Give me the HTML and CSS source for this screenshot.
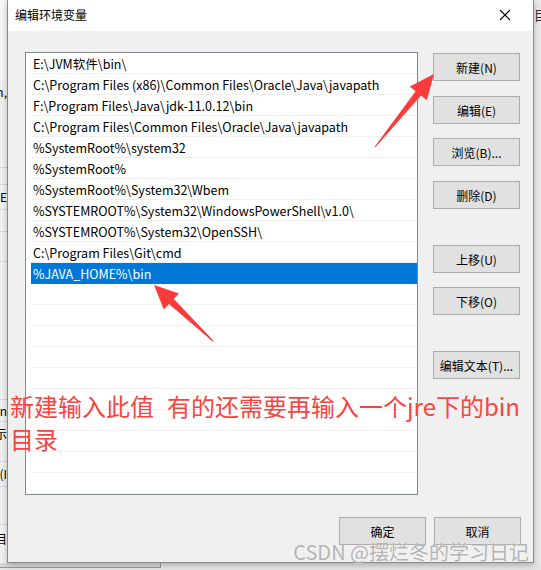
FILE: index.html
```html
<!DOCTYPE html>
<html lang="zh">
<head>
<meta charset="utf-8">
<title>编辑环境变量</title>
<link rel="stylesheet" href="styles.css">
</head>
<body>
<div class="screen">
  <div class="stage">
    <div class="bg-left">
      <div class="frag h80"></div>
      <div class="frag h24 txt"><span>\bin,</span></div>
      <div class="frag h64 line"></div>
      <div class="frag h17 line"></div>
      <div class="frag h25 line txt"><span>编辑(E</span></div>
      <div class="frag h22 line"></div>
      <div class="frag h30 line"></div>
      <div class="frag h138 line"></div>
      <div class="frag h22 line txt"><span>bin</span></div>
      <div class="frag h24 txt"><span>提示</span></div>
      <div class="frag h16 line"></div>
      <div class="frag h25 line txt"><span>(I</span></div>
      <div class="frag h38 line"></div>
      <div class="frag h28 txt"><span>目</span></div>
    </div>

    <div class="dialog">
      <div class="titlebar">
        <span class="title">编辑环境变量</span>
        <svg class="close" width="12" height="12" viewBox="0 0 12 12"><path d="M1 1 L11 11 M11 1 L1 11" stroke="#000" stroke-width="1.1" fill="none"/></svg>
      </div>
      <div class="dlg-body">
        <div class="main">
          <div class="list">
            <div class="row">E:\JVM软件\bin\</div>
            <div class="row">C:\Program Files (x86)\Common Files\Oracle\Java\javapath</div>
            <div class="row">F:\Program Files\Java\jdk-11.0.12\bin</div>
            <div class="row">C:\Program Files\Common Files\Oracle\Java\javapath</div>
            <div class="row">%SystemRoot%\system32</div>
            <div class="row">%SystemRoot%</div>
            <div class="row">%SystemRoot%\System32\Wbem</div>
            <div class="row">%SYSTEMROOT%\System32\WindowsPowerShell\v1.0\</div>
            <div class="row">%SYSTEMROOT%\System32\OpenSSH\</div>
            <div class="row">C:\Program Files\Git\cmd</div>
            <div class="row selected">%JAVA_HOME%\bin</div>
            <div class="row"></div>
            <div class="row"></div>
            <div class="row"></div>
            <div class="row"></div>
            <div class="row"></div>
            <div class="row"></div>
            <div class="row"></div>
            <div class="row"></div>
            <div class="row"></div>
            <div class="row"></div>
            <div class="row"></div>
          </div>
          <div class="btns">
            <div class="btn first">新建(N)</div>
            <div class="btn g15">编辑(E)</div>
            <div class="btn g14">浏览(B)...</div>
            <div class="btn g15">删除(D)</div>
            <div class="btn g36">上移(U)</div>
            <div class="btn g14">下移(O)</div>
            <div class="btn g36">编辑文本(T)...</div>
          </div>
        </div>
        <div class="footer">
          <div class="btn">确定</div>
          <div class="btn">取消</div>
        </div>
      </div>
    </div>

    <div class="bg-right"><span>目</span></div>
  </div>
  <div class="bottom-strip"><div class="bottom-win"></div></div>

  <div class="note">新建输入此值<span class="sp"></span>有的还需要再输入一个jre下的bin<br>目录</div>

  <svg class="arrows" width="541" height="570" viewBox="0 0 541 570">
    <polygon points="434,74 426.8,100.3 421,95.6 375.4,147.3 374.6,146.7 415.6,91.2 409.8,86.5" fill="#fa3b3b"/>
    <polygon points="154,285 179,293.5 173.8,299 213.3,340.6 212.7,341.4 169,304 163.8,309.5" fill="#fa3b3b"/>
  </svg>

  <div class="watermark">CSDN @摆烂冬的学习日记</div>
</div>
</body>
</html>
```

FILE: styles.css
```css
* { box-sizing: border-box; }
html, body { margin: 0; padding: 0; }
body {
  width: 541px;
  height: 570px;
  overflow: hidden;
  background: #ececec;
  font-family: "Noto Sans CJK SC", "Noto Sans", sans-serif;
  font-size: 12px;
  color: #000;
}
.screen {
  position: relative;
  width: 541px;
  height: 570px;
  overflow: hidden;
}
.stage {
  display: flex;
  height: 563px;
}

/* background window fragments */
.bg-left {
  width: 7px;
  flex: none;
  background: #f0f0f0;
  display: flex;
  flex-direction: column;
  overflow: hidden;
}
.frag { flex: none; display: flex; justify-content: flex-end; align-items: center; white-space: nowrap; overflow: hidden; }
.frag.line { border-bottom: 1px solid #d6d6d6; }
.frag span { flex: none; line-height: 1; }
.h80 { height: 80px; background: #f7f7f7; }
.h24 { height: 24px; }
.h64 { height: 64px; }
.h17 { height: 17px; }
.h25 { height: 25px; }
.h22 { height: 22px; }
.h30 { height: 30px; }
.h138 { height: 138px; }
.h16 { height: 16px; }
.h38 { height: 38px; }
.h28 { height: 28px; }

.bg-right {
  width: 7px;
  flex: none;
  background: #e9e9e9;
  overflow: hidden;
  white-space: nowrap;
  padding-top: 8px;
  font-size: 13px;
  line-height: 14px;
  color: #333;
}

/* dialog */
.dialog {
  width: 527px;
  flex: none;
  height: 563px;
  border: 1px solid #8a8a8a;
  border-top: none;
  background: #f0f0f0;
  display: flex;
  flex-direction: column;
  box-shadow: 0 2px 6px rgba(0,0,0,0.25);
  position: relative;
  z-index: 1;
}
.titlebar {
  height: 31px;
  flex: none;
  background: #fff;
  display: flex;
  align-items: center;
  justify-content: space-between;
  padding: 0 22px 2px 7px;
}
.title { font-size: 12px; color: #000; }
.close { display: block; }

.dlg-body {
  flex: 1;
  padding: 21px 12px 0 17px;
  display: flex;
  flex-direction: column;
}
.main { display: flex; align-items: flex-start; }
.list {
  width: 393px;
  height: 443px;
  background: #fff;
  border: 1px solid #828790;
  padding: 0 0 0 5px;
  overflow: hidden;
  flex: none;
}
.row {
  height: 21px;
  line-height: 20px;
  padding-top: 1px;
  border-bottom: 1px solid #f0f0f0;
  padding-left: 2px;
  white-space: nowrap;
  overflow: hidden;
  font-size: 12.5px;
}
.row.selected {
  background: #0078d7;
  color: #fff;
  border-bottom-color: #0078d7;
}

.btns {
  margin-left: 15px;
  display: flex;
  flex-direction: column;
}
.btn {
  width: 87px;
  height: 28px;
  background: #e1e1e1;
  border: 1px solid #adadad;
  display: flex;
  align-items: center;
  justify-content: center;
  font-size: 12px;
  white-space: nowrap;
  flex: none;
}
.btn.first { margin-top: 1px; }
.btn.g14 { margin-top: 14px; }
.btn.g15 { margin-top: 15px; }
.btn.g36 { margin-top: 36px; }

.footer {
  margin-top: 22px;
  display: flex;
  justify-content: flex-end;
  gap: 8px;
}

.bottom-strip {
  height: 7px;
  background: #e4e4e4;
  position: relative;
}
.bottom-win {
  width: 161px;
  height: 5px;
  border-bottom: 1px solid #9a9a9a;
  border-right: 1px solid #9a9a9a;
  background: #d9d9d9;
}

/* annotations */
.note {
  position: absolute;
  left: 10px;
  top: 389px;
  font-size: 24px;
  line-height: 33px;
  color: #f7443f;
  white-space: nowrap;
  z-index: 3;
}
.note .sp { display: inline-block; width: 13px; }
.arrows {
  position: absolute;
  left: 0;
  top: 0;
  z-index: 3;
}
.watermark {
  position: absolute;
  right: 12px;
  top: 540px;
  font-size: 20px;
  line-height: 24px;
  color: rgba(160,160,160,0.8);
  text-shadow: 0 0 1px rgba(255,255,255,0.9);
  white-space: nowrap;
  z-index: 4;
}
```
